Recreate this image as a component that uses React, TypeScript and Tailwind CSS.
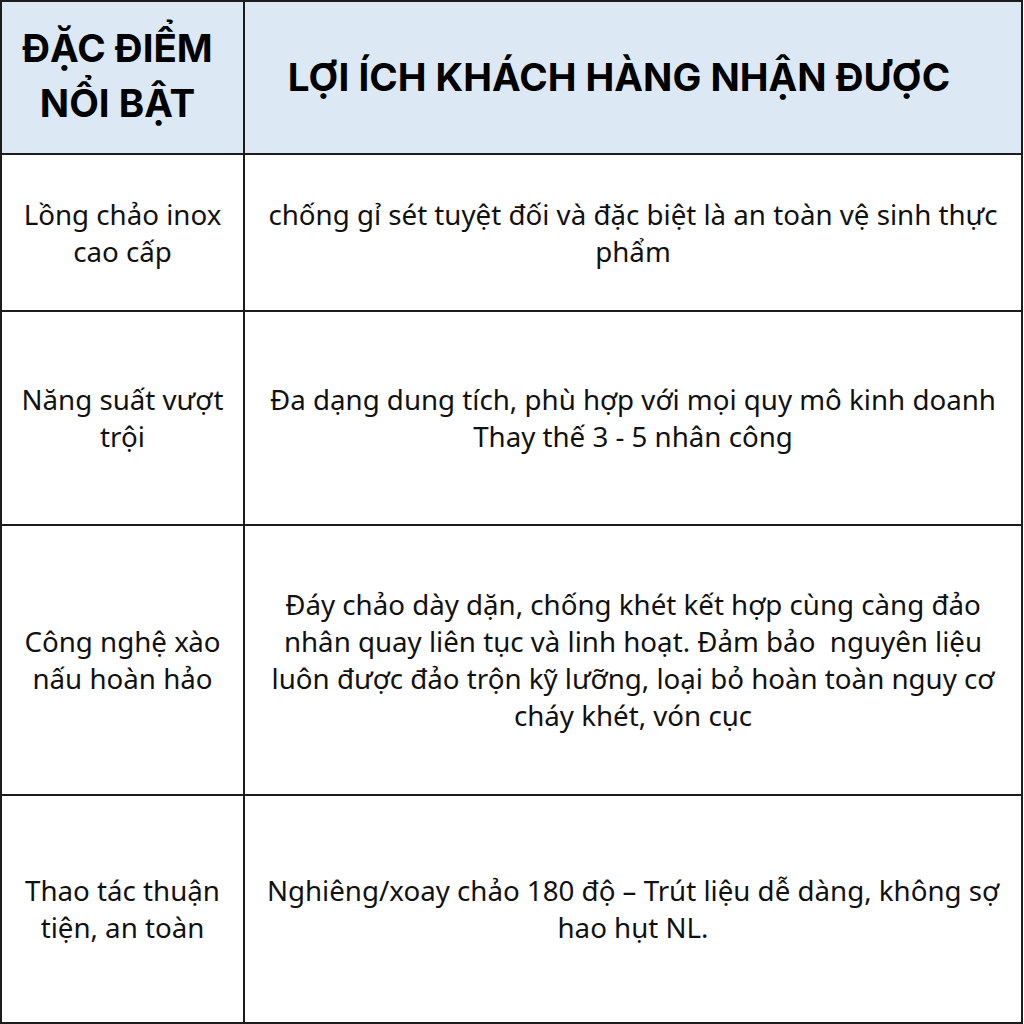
const rows = [
  {
    feature: ["Lồng chảo inox", "cao cấp"],
    benefit: ["chống gỉ sét tuyệt đối và đặc biệt là an toàn vệ sinh thực", "phẩm"],
    h: "h-[157px]",
  },
  {
    feature: ["Năng suất vượt", "trội"],
    benefit: ["Đa dạng dung tích, phù hợp với mọi quy mô kinh doanh", "Thay thế 3 - 5 nhân công"],
    h: "h-[214px]",
  },
  {
    feature: ["Công nghệ xào", "nấu hoàn hảo"],
    benefit: [
      "Đáy chảo dày dặn, chống khét kết hợp cùng càng đảo",
      "nhân quay liên tục và linh hoạt. Đảm bảo  nguyên liệu",
      "luôn được đảo trộn kỹ lưỡng, loại bỏ hoàn toàn nguy cơ",
      "cháy khét, vón cục",
    ],
    h: "h-[270px]",
  },
  {
    feature: ["Thao tác thuận", "tiện, an toàn"],
    benefit: ["Nghiêng/xoay chảo 180 độ – Trút liệu dễ dàng, không sợ", "hao hụt NL."],
    h: "h-[226px]",
  },
];

const App = () => {
  return (
    <div className="w-[1024px] h-[1024px] bg-white">
      <div className="w-[1023px] border-2 border-[#1c1c1c] text-[#111]">
        <div className="flex h-[153px] bg-[#dde8f5] border-b-2 border-[#1c1c1c] font-['Inter',sans-serif] font-bold text-black">
          <div className="w-[243px] shrink-0 border-r-2 border-[#1c1c1c] flex flex-col items-center justify-center text-center text-[38.5px] leading-[55px] whitespace-nowrap pr-[10px] pb-[3px]">
            <span>ĐẶC ĐIỂM</span>
            <span>NỔI BẬT</span>
          </div>
          <div className="flex-1 flex items-center justify-center text-center text-[38.5px] leading-[55px] whitespace-nowrap pr-[28px]">
            LỢI ÍCH KHÁCH HÀNG NHẬN ĐƯỢC
          </div>
        </div>
        {rows.map((r, i) => (
          <div
            key={i}
            className={`flex ${r.h} ${i < rows.length - 1 ? "border-b-2 border-[#1c1c1c]" : ""} font-['Noto_Sans',sans-serif] text-[27.7px] leading-[37px]`}
          >
            <div className="w-[243px] shrink-0 border-r-2 border-[#1c1c1c] flex flex-col items-center justify-center text-center whitespace-nowrap">
              {r.feature.map((f, j) => (
                <span key={j}>{f}</span>
              ))}
            </div>
            <div className="flex-1 flex flex-col items-center justify-center text-center whitespace-pre">
              {r.benefit.map((b, j) => (
                <span key={j}>{b}</span>
              ))}
            </div>
          </div>
        ))}
      </div>
    </div>
  );
};

export default App;
